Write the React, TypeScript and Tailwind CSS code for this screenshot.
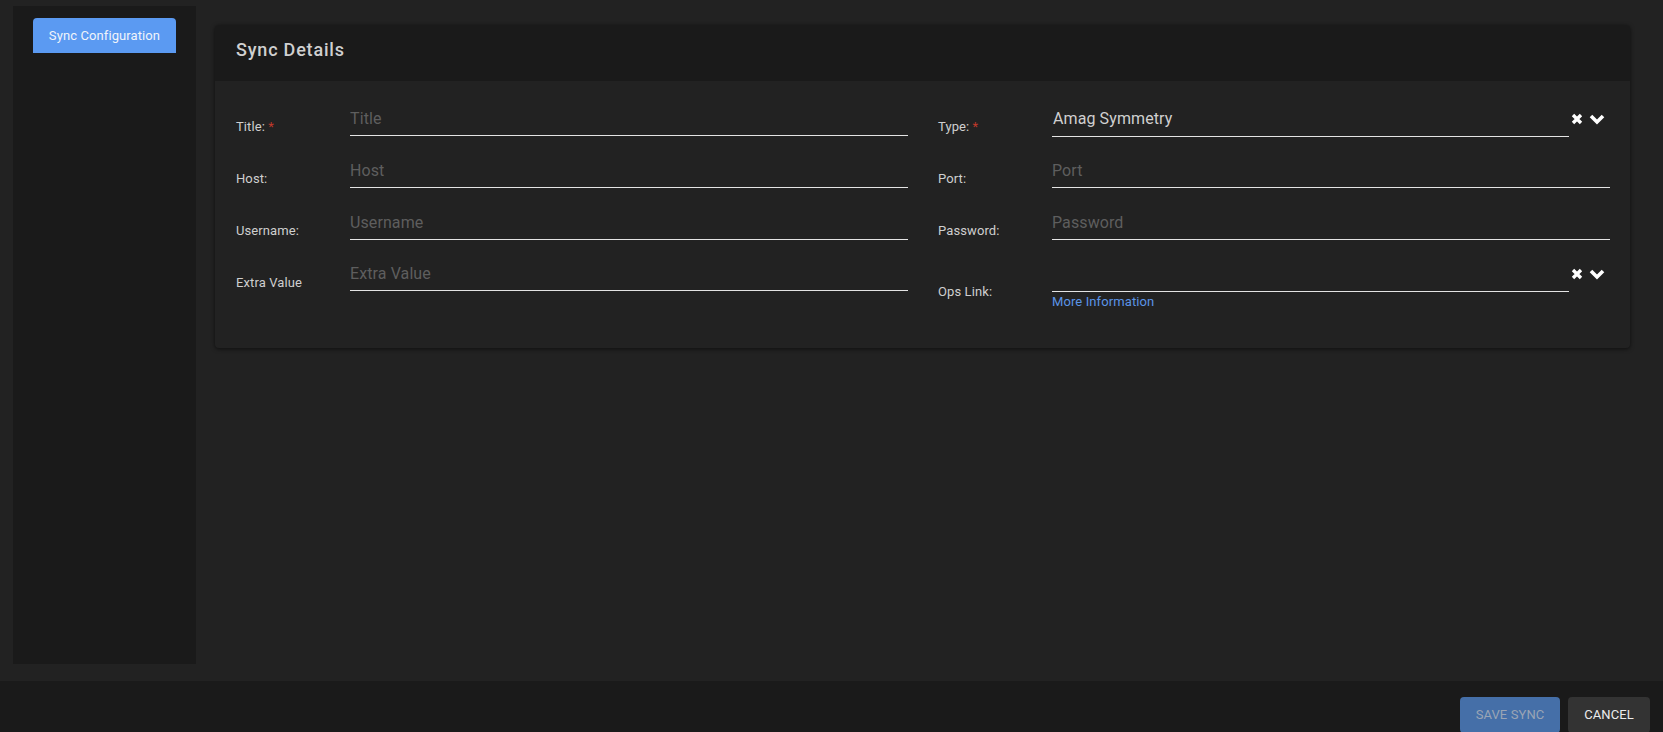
const font = { fontFamily: "Roboto, sans-serif" };

function Label({ text, required, centered }: { text: string; required?: boolean; centered?: boolean }) {
  return (
    <label className={`w-[114px] shrink-0 text-[13px] leading-[16px] text-[#cfcfcf] tracking-[0.1px] ${centered ? "" : "pt-[1px]"}`}>
      {text}
      {required && <span className="text-[#c0392b]"> *</span>}
    </label>
  );
}

function Field({ label, required, placeholder, short }: { label: string; required?: boolean; placeholder: string; short?: boolean }) {
  return (
    <div className="flex items-center h-[52px]">
      <Label text={label} required={required} />
      <div className={`flex-1 self-start ${short ? "h-[35px]" : "h-[36px]"} border-b border-[#e4e4e4] flex items-center pt-[2px]`}>
        <input
          placeholder={placeholder}
          className="w-full bg-transparent outline-none text-[16px] text-[#d0d0d0] placeholder:text-[#5e5e5e] tracking-[0.1px]"
        />
      </div>
    </div>
  );
}

function SelectIcons() {
  return (
    <div className="w-[41px] shrink-0 flex items-center gap-[6px] pl-[2px]">
      <svg width="12" height="12" viewBox="0 0 12 12" className="shrink-0">
        <path d="M2 2 L10 10 M10 2 L2 10" stroke="#fff" strokeWidth="3.4" fill="none" />
      </svg>
      <svg width="16" height="12" viewBox="0 0 16 12" className="shrink-0">
        <path d="M2 3 L8 9 L14 3" stroke="#fff" strokeWidth="3.6" fill="none" />
      </svg>
    </div>
  );
}

function SelectBox({ value, tall }: { value?: string; tall?: boolean }) {
  return (
    <div className={`${tall ? "h-[37px]" : "h-[36px]"} flex`}>
      <div className="flex-1 border-b border-[#e4e4e4] flex items-center text-[16px] text-[#d0d0d0] pl-[1px] pt-[2px] tracking-[0.1px]">
        {value}
      </div>
      <SelectIcons />
    </div>
  );
}

export default function App() {
  return (
    <div style={font} className="h-[732px] overflow-hidden bg-[#222222] flex flex-col">
      <div className="h-[681px] shrink-0 flex pl-[13px] pt-[6px]">
        <aside className="w-[183px] h-[658px] bg-[#1a1a1a] shrink-0 pl-[20px] pt-[12px]">
          <div className="w-[143px] h-[35px] bg-[#5b9af2] rounded-t-[4px] flex items-center justify-center text-[13px] text-[#f0f4fa] tracking-[0.1px]">
            Sync Configuration
          </div>
        </aside>
        <main className="ml-[19px] w-[1415px] mt-[19px]">
          <section className="h-[323px] bg-[#222222] rounded-[4px] shadow-[0_1px_4px_rgba(0,0,0,0.6)] overflow-hidden">
            <header className="h-[56px] bg-[#1a1a1a] flex items-center pl-[21px] pb-[8px] text-[18px] font-medium text-[#d0d0d0] tracking-[0.8px]">
              Sync Details
            </header>
            <div className="grid grid-cols-2 items-start gap-x-[30px] pl-[21px] pr-[20px] pt-[19px]">
              <Field label="Title:" required placeholder="Title" />
              <div className="flex items-center h-[52px]">
                <Label text="Type:" required />
                <div className="flex-1 self-start">
                  <SelectBox value="Amag Symmetry" tall />
                </div>
              </div>
              <Field label="Host:" placeholder="Host" />
              <Field label="Port:" placeholder="Port" />
              <Field label="Username:" placeholder="Username" />
              <Field label="Password:" placeholder="Password" />
              <Field label="Extra Value" placeholder="Extra Value" short />
              <div className="flex items-center h-[72px]">
                <Label text="Ops Link:" centered />
                <div className="flex-1 self-start">
                  <SelectBox />
                  <a className="block mt-[2px] text-[13px] leading-[16px] text-[#5b94e6] tracking-[0.1px]">More Information</a>
                </div>
              </div>
            </div>
          </section>
        </main>
      </div>
      <footer className="flex-1 bg-[#1a1a1a] flex justify-end gap-[8px] pr-[13px] pt-[16px]">
        <button className="w-[100px] h-[36px] shrink-0 rounded-[4px] bg-[#456fa8] text-[13px] tracking-[0.1px] text-[#9aa5b5]">SAVE SYNC</button>
        <button className="w-[82px] h-[36px] shrink-0 rounded-[4px] bg-[#333333] text-[13px] tracking-[0.1px] text-[#ececec]">CANCEL</button>
      </footer>
    </div>
  );
}
